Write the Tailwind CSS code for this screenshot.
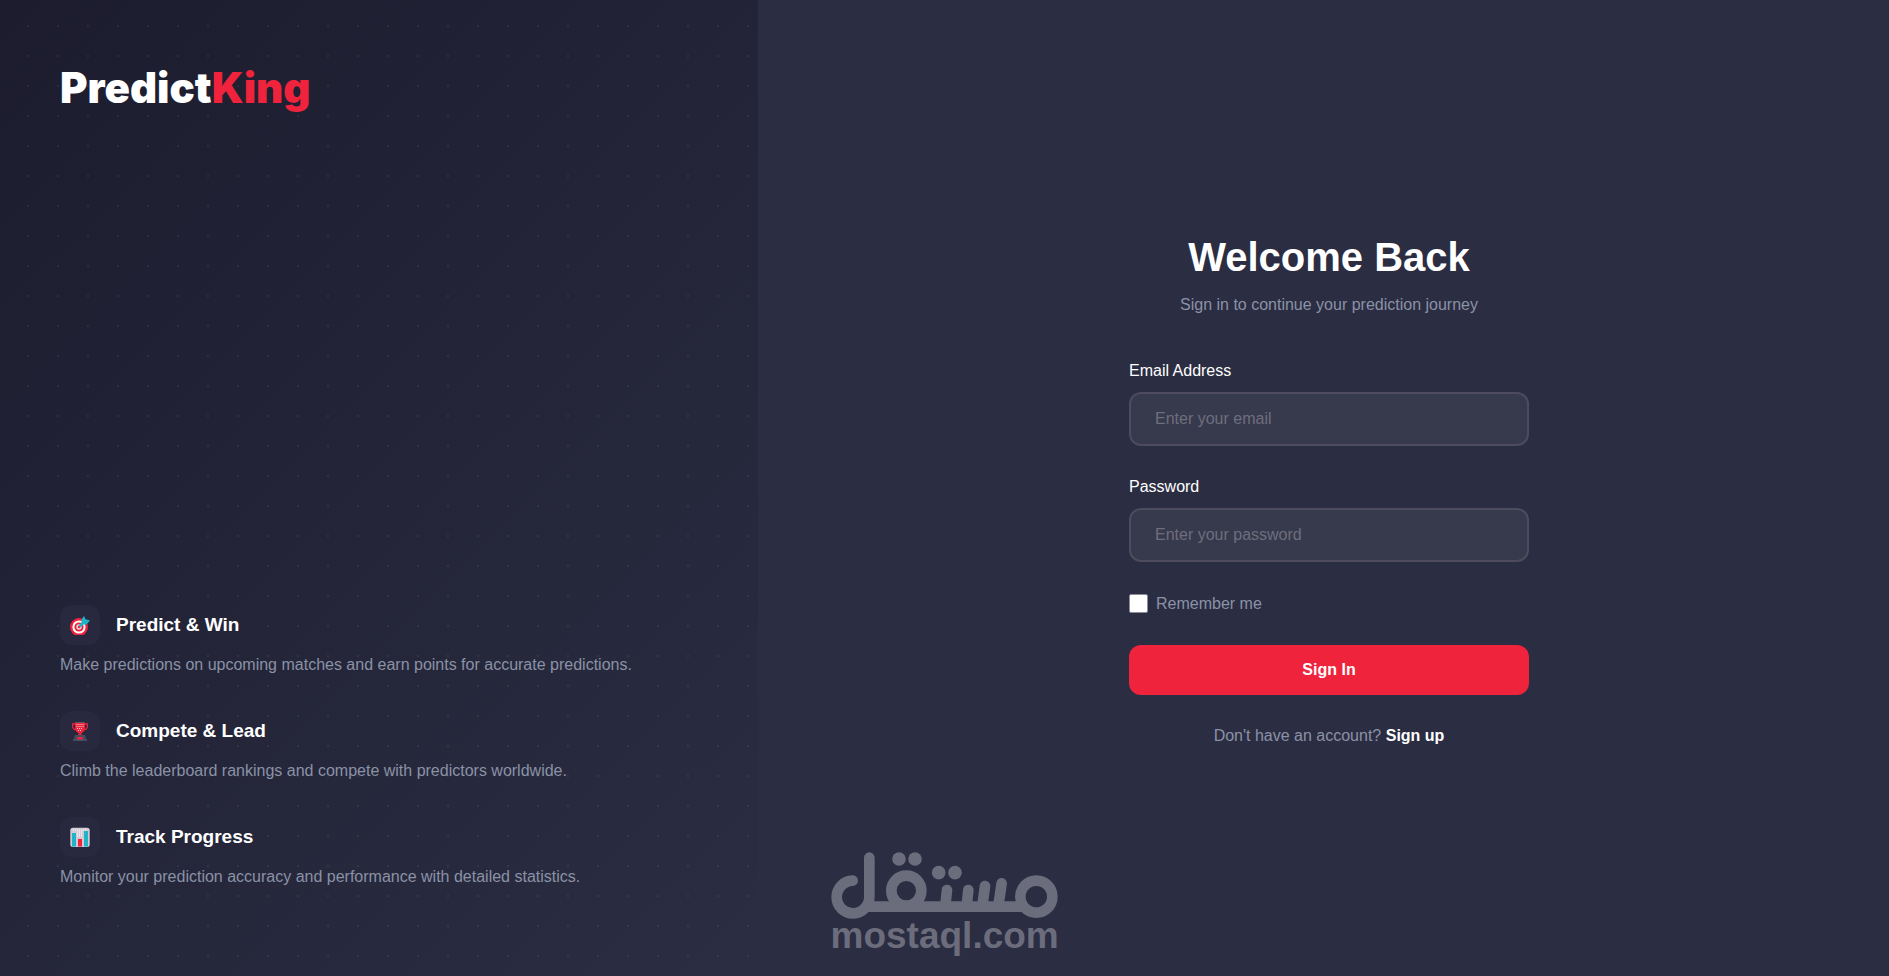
<!DOCTYPE html>
<html lang="en">
<head>
<meta charset="utf-8">
<meta name="viewport" content="width=device-width, initial-scale=1">
<title>PredictKing - Sign In</title>
<script src="https://cdn.jsdelivr.net/npm/@tailwindcss/browser@4"></script>
</head>
<body class="relative flex min-h-screen bg-[#2b2d42] font-['Liberation_Sans',Arial,sans-serif] text-base text-[#8a92a6]">

<aside class="flex w-2/5 min-w-[758px] flex-col justify-between bg-[radial-gradient(circle_at_center,rgba(255,255,255,0.06)_1px,transparent_1px),linear-gradient(135deg,#1c1c2e_0%,#2b2d42_100%)] bg-[size:30px_30px,100%_100%] bg-[position:13px_11px,0_0] px-[60px] pt-[60px] pb-[87px]">
  <h1 class="font-['Inter',sans-serif] text-[42px] leading-[56px] font-black text-white">Predict<span class="text-[#ef233c]">King</span></h1>

  <ul class="flex flex-col gap-[34px]">
    <li>
      <div class="mb-2 flex items-center gap-4">
        <span class="flex size-10 items-center justify-center rounded-xl bg-[#28293e]">
          <svg class="size-5" viewBox="0 0 20 20" aria-hidden="true">
            <circle cx="9" cy="12" r="9" fill="#ef233c"/><circle cx="9" cy="12" r="6.6" fill="#fff"/><circle cx="9" cy="12" r="4.6" fill="#ef233c"/><circle cx="9" cy="12" r="2.7" fill="#edd5dc"/><circle cx="9" cy="12" r="1.2" fill="#ef233c"/>
            <path d="M9.5 11.5 15 6" stroke="#1eb5c8" stroke-width="2.5"/><path d="M11.500 8.500V4.500L14 1l1.500 3.200 4.500 1.300L16.500 9.500H12z" fill="#1eb5c8"/>
          </svg>
        </span>
        <h2 class="text-[19px] leading-6 font-bold text-white">Predict &amp; Win</h2>
      </div>
      <p>Make predictions on upcoming matches and earn points for accurate predictions.</p>
    </li>
    <li>
      <div class="mb-2 flex items-center gap-4">
        <span class="flex size-10 items-center justify-center rounded-xl bg-[#28293e]">
          <svg class="size-5" viewBox="0 0 20 20" aria-hidden="true">
            <path d="M6 3H2.700v3Q3 8.500 7 9M14 3h3.300v3Q17 8.500 13 9" fill="none" stroke="#ef233c" stroke-width="1.300"/>
            <path d="M5 1.500h10V7q-.5 4-3.500 5v3h-3v-3Q5.500 11 5 7z" fill="#ef233c"/>
            <path d="M5 1h10v1H5z" fill="#62535f"/>
            <path d="M6.500 3.500h8M6.500 5.500h8M7 7.500h6M8 9.500h4" stroke="#f7c6ce" stroke-width="1" stroke-dasharray="1 1"/>
            <path d="M5 14h10l1 4h1v2H3v-2h1z" fill="#484b5d"/><path d="M7.500 16h5v2.500h-5z" fill="#ef233c"/>
          </svg>
        </span>
        <h2 class="text-[19px] leading-6 font-bold text-white">Compete &amp; Lead</h2>
      </div>
      <p>Climb the leaderboard rankings and compete with predictors worldwide.</p>
    </li>
    <li>
      <div class="mb-2 flex items-center gap-4">
        <span class="flex size-10 items-center justify-center rounded-xl bg-[#28293e]">
          <svg class="size-5" viewBox="0 0 20 20" aria-hidden="true">
            <rect x=".3" y=".8" width="19.400" height="19.200" rx="2.500" fill="#d2cbd5"/>
            <path d="M3 3h14M7 5h6M7 7h6M7 9h6" stroke="#fff" stroke-width="1" stroke-dasharray="1 1"/>
            <path d="M2 6h4v13.500H2zM14 4h4v15.500h-4z" fill="#1eb5c8"/><path d="M8 12h4v7.500H8z" fill="#ef233c"/>
          </svg>
        </span>
        <h2 class="text-[19px] leading-6 font-bold text-white">Track Progress</h2>
      </div>
      <p>Monitor your prediction accuracy and performance with detailed statistics.</p>
    </li>
  </ul>
</aside>

<main class="flex flex-1 items-center justify-center pt-1 pl-[11px]">
  <form class="w-full max-w-[400px]" onsubmit="return false">
    <h2 class="text-center text-[40px] leading-[48px] font-bold text-white">Welcome Back</h2>
    <p class="mt-3 mb-[42px] text-center">Sign in to continue your prediction journey</p>

    <label for="email" class="block text-white">Email Address</label>
    <input id="email" type="email" placeholder="Enter your email" class="mt-[9px] mb-[29px] block h-[54px] w-full rounded-xl border-2 border-[#4e4b5f] bg-[#37394c] px-6 text-white outline-none placeholder:text-[#6d6e7d]">

    <label for="password" class="block text-white">Password</label>
    <input id="password" type="password" placeholder="Enter your password" class="mt-[9px] mb-[30px] block h-[54px] w-full rounded-xl border-2 border-[#4e4b5f] bg-[#37394c] px-6 text-white outline-none placeholder:text-[#6d6e7d]">

    <div class="flex items-center gap-2">
      <input id="remember" type="checkbox" class="size-[19px] appearance-none rounded-[2px] border border-[#8d8d99] bg-white checked:bg-[#ef233c]">
      <label for="remember">Remember me</label>
    </div>

    <button type="submit" class="mt-[29px] block h-[50px] w-full rounded-xl bg-[#ef233c] font-bold text-white">Sign In</button>
    <p class="mt-[29px] text-center">Don't have an account? <a href="#" class="font-bold text-white">Sign up</a></p>
  </form>
</main>

<!-- Watermark laid over both panels -->
<div class="pointer-events-none absolute bottom-[18px] left-1/2 -translate-x-1/2 text-[#6b6c7c]">
  <svg class="h-[106px] w-[230px]" viewBox="60 36 690 318" role="img" aria-label="مستقل mostaql.com">
    <g fill="none" stroke="currentColor" stroke-width="32" stroke-linecap="round">
      <path d="M128 122A49 49 0 1 0 178 170V53"/>
      <path d="M170 200H650" stroke-linecap="butt"/>
      <circle cx="289" cy="152" r="45"/><circle cx="679" cy="170" r="48"/>
      <path d="M411 150L406 198M475 150L470 198M525 138L517 198M575 130L565 198"/>
    </g>
    <g fill="currentColor"><circle cx="267" cy="57" r="20.500"/><circle cx="315" cy="57" r="20.500"/><circle cx="386" cy="98" r="20.500"/><circle cx="435" cy="98" r="20.500"/>
      <text x="404" y="325" text-anchor="middle" font-size="111" font-weight="700">mostaql.com</text>
    </g>
  </svg>
</div>
</body>
</html>
